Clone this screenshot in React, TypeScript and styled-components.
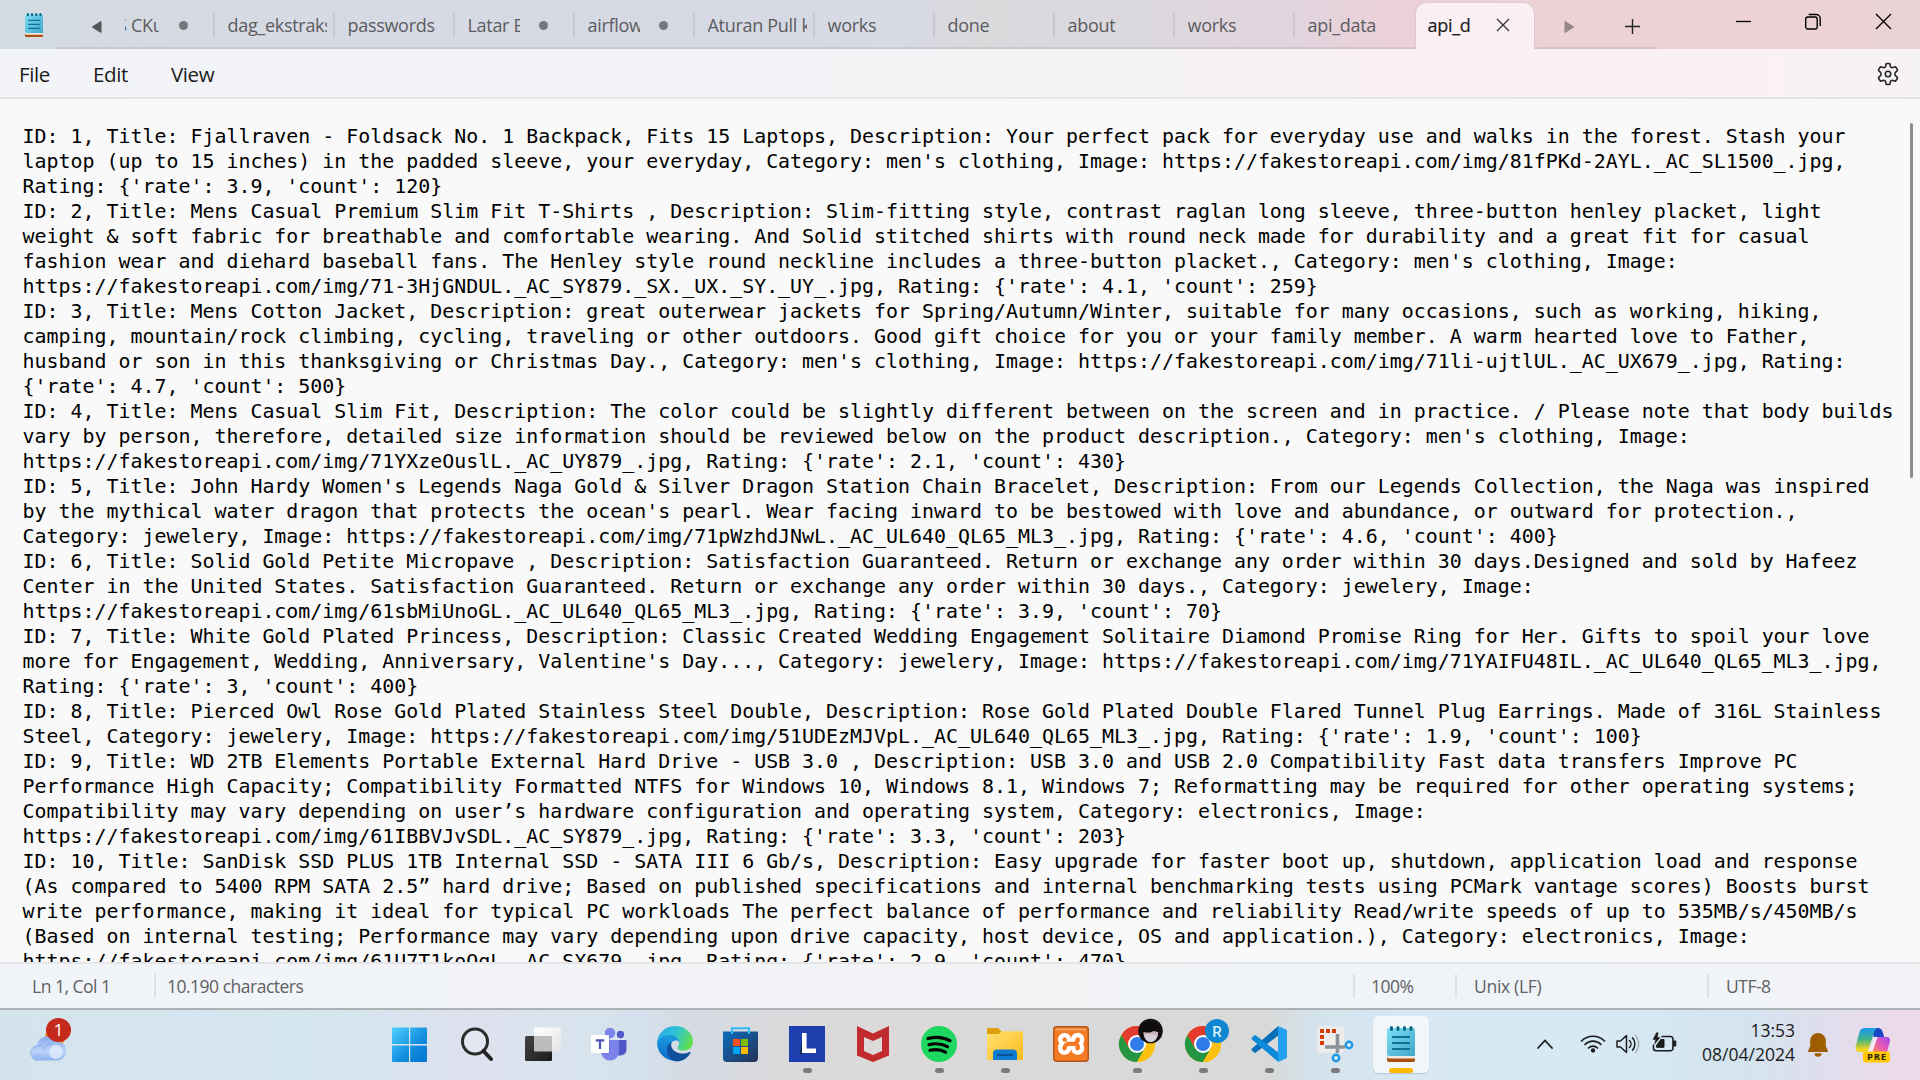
import React from "react";
import styled, { createGlobalStyle } from "styled-components";
import { SiXampp } from "react-icons/si";

const Global = createGlobalStyle`
  * { box-sizing: border-box; }
  html, body { margin: 0; padding: 0; width: 1920px; height: 1080px; overflow: hidden; }
  body { font-family: "Open Sans", "Noto Sans", sans-serif; }
  svg { display: block; flex: none; }
`;

const Screen = styled.div`
  display: flex;
  flex-direction: column;
  width: 1920px;
  height: 1080px;
  overflow: hidden;
`;

/* ---------- title bar ---------- */
const TitleBar = styled.header`
  display: flex;
  height: 49px;
  flex: none;
  background: linear-gradient(90deg, #d3dbe1 0, #d5dae2 120px, #d7dae4 400px, #d5d9e3 640px, #d8dae4 900px, #dadadd 980px, #dbd8dd 1150px, #e1d6dd 1240px, #e2d4dd 1300px, #ecd0d9 1400px, #ecd2d6 1480px, #edd1d5 1750px, #e9d3d6 1920px);
`;
const AppIcon = styled.div`
  width: 58px;
  padding: 13px 0 0 25px;
`;
const Strip = styled.div`
  display: flex;
  width: 1599px;
  border-bottom: 2px solid rgba(110, 90, 110, 0.13);
`;
const ScrollLeft = styled.div`
  width: 67px;
  padding: 21px 0 0 34px;
`;
const Tabs = styled.div`
  display: flex;
  width: 1411px;
  height: 49px;
  margin-bottom: -2px;
  overflow: hidden;
`;
const Tab = styled.div<{ $first?: boolean; $last?: boolean }>`
  display: flex;
  position: relative;
  flex: none;
  width: ${(p) => (p.$first ? 90 : 120)}px;
  padding-left: ${(p) => (p.$first ? 0 : 12.5)}px;
  height: 49px;
  &::after {
    content: "";
    position: absolute;
    right: 0;
    top: 13px;
    width: 2px;
    height: 24px;
    background: rgba(100, 100, 120, 0.15);
    display: ${(p) => (p.$last ? "none" : "block")};
  }
`;
const TabLabel = styled.span<{ $w: number; $shift?: number; $tight?: number }>`
  width: ${(p) => p.$w}px;
  overflow: hidden;
  white-space: nowrap;
  font-size: 18px;
  line-height: 24px;
  padding-top: 13px;
  height: 45px;
  color: #5b5c60;
  text-indent: ${(p) => p.$shift ?? 0}px;
  letter-spacing: ${(p) => p.$tight ?? -0.3}px;
`;
const Dot = styled.i`
  width: 9px;
  height: 9px;
  border-radius: 50%;
  background: #76787c;
  margin: 20.5px 0 0 19.5px;
`;
const ActiveTab = styled.div`
  display: flex;
  flex: none;
  width: 120px;
  height: 47px;
  margin: 2px 0 0;
  padding: 0 0 0 11.5px;
  background: #faf0f4;
  border: 1px solid #e0c8ce;
  border-bottom: 0;
  border-radius: 11px 11px 0 0;
  span { color: #1b1b1b; padding-top: 10px; -webkit-text-stroke: 0.2px #1b1b1b; }
  svg { margin: 15px 0 0 25.5px; }
`;
const StripEnd = styled.div`
  display: flex;
  padding-left: 28px;
`;
const WindowButtons = styled.div`
  display: flex;
  padding: 13px 0 0 79px;
  gap: 53px;
`;

/* ---------- menu ---------- */
const MenuBar = styled.nav`
  display: flex;
  flex: none;
  height: 50px;
  border-bottom: 2px solid #e5e5e9;
  background: linear-gradient(90deg, #f2f4f8 0, #f2f3f8 640px, #f2f3f5 850px, #f4f3f4 1100px, #f6f1f4 1250px, #faf0f4 1440px, #faf1f2 1750px, #f6f3f3 1920px);
  padding: 0 20px 0 19px;
`;
const MenuItem = styled.span<{ $w: number }>`
  width: ${(p) => p.$w}px;
  font-size: 20.5px;
  line-height: 28px;
  padding-top: 11px;
  color: #1b1b1b;
  letter-spacing: -0.4px;
`;
const Gear = styled.div`
  margin-left: auto;
  padding-top: 13px;
`;

/* ---------- editor ---------- */
const Editor = styled.main`
  display: flex;
  justify-content: space-between;
  flex: none;
  height: 863px;
  overflow: hidden;
  background: #f9f9f9;
  padding: 24px 7px 0 22.5px;
`;
const Text = styled.pre`
  margin: 1px 0 0;
  font-family: "DejaVu Sans Mono", monospace;
  font-size: 19.93px;
  line-height: 25px;
  color: #000;
`;
const Thumb = styled.div`
  width: 3px;
  height: 355px;
  background: #8d8d8d;
  border-radius: 2px;
`;

/* ---------- status bar ---------- */
const StatusBar = styled.footer`
  display: flex;
  flex: none;
  height: 48px;
  border-top: 2px solid #e3e5e6;
  border-bottom: 2px solid #abb1b5;
  background: linear-gradient(90deg, #f1f4f8 0, #f2f4f8 640px, #f2f3f5 1050px, #eff4f8 1280px, #f0f4f8 1650px, #f3f3f8 1920px);
`;
const Status = styled.span<{ $w: number; $pad: number; $ls?: number }>`
  width: ${(p) => p.$w}px;
  padding: 10px 0 0 ${(p) => p.$pad}px;
  font-size: 17.5px;
  line-height: 24px;
  white-space: nowrap;
  color: #5f6163;
  letter-spacing: ${(p) => p.$ls ?? -0.5}px;
`;
const Sep = styled.i`
  width: 2px;
  height: 24px;
  margin-top: 10px;
  background: #dfe2e5;
`;

/* ---------- task bar ---------- */
const TaskBar = styled.div`
  display: flex;
  flex: none;
  height: 70px;
  background: linear-gradient(90deg, #d3e4ec 0, #d6e5ef 200px, #d4e6ee 300px, #d8e4ef 390px, #dee1ee 470px, #d7e4ee 590px, #d4e1ec 640px, #d5dae3 690px, #d9d9dc 770px, #dcdad9 880px, #d9d9d9 1000px, #d9d9d9 1270px, #d4e2eb 1310px, #d8e9f4 1430px, #d6e9f4 1600px, #d4e4ee 1750px, #dfdeed 1820px, #ecdaea 1900px, #ecdaea 1920px);
`;
const Weather = styled.div`
  width: 393px;
  padding: 7px 0 0 29px;
  position: relative;
`;
const Badge = styled.span`
  position: absolute;
  left: 46px;
  top: 8px;
  width: 25px;
  height: 24px;
  border-radius: 50%;
  background: #c42b1c;
  color: #fff;
  font-size: 17px;
  line-height: 24px;
  text-align: center;
`;
const Apps = styled.div`
  display: flex;
  gap: 10px;
  margin-left: -10px;
`;
const AppButton = styled.div<{ $active?: boolean }>`
  display: flex;
  flex-direction: column;
  align-items: center;
  width: 56px;
  height: 57px;
  margin-top: 6px;
  padding-top: 10px;
  border-radius: 6px;
  background: ${(p) => (p.$active ? "rgba(255,255,255,.65)" : "transparent")};
  box-shadow: ${(p) => (p.$active ? "0 1px 1px rgba(120,140,155,.35)" : "none")};
`;
const Running = styled.i<{ $active?: boolean }>`
  width: ${(p) => (p.$active ? 24 : 9)}px;
  height: 5px;
  margin-top: 6px;
  border-radius: 3px;
  background: ${(p) => (p.$active ? "#ffb900" : "#7b7c7d")};
`;
const Tray = styled.div`
  display: flex;
  padding-left: 108px;
`;
const Clock = styled.div`
  width: 96px;
  margin-left: 21px;
  padding-top: 8px;
  text-align: right;
  font-size: 17.5px;
  line-height: 24px;
  color: #1c1c1c;
  white-space: nowrap;
`;
const Time = styled.div`
  letter-spacing: 0;
`;
const Day = styled.div`
  letter-spacing: 0;
`;

const record = [
  "ID: 1, Title: Fjallraven - Foldsack No. 1 Backpack, Fits 15 Laptops, Description: Your perfect pack for everyday use and walks in the forest. Stash your",
  "laptop (up to 15 inches) in the padded sleeve, your everyday, Category: men's clothing, Image: https://fakestoreapi.com/img/81fPKd-2AYL._AC_SL1500_.jpg,",
  "Rating: {'rate': 3.9, 'count': 120}",
  "ID: 2, Title: Mens Casual Premium Slim Fit T-Shirts , Description: Slim-fitting style, contrast raglan long sleeve, three-button henley placket, light",
  "weight & soft fabric for breathable and comfortable wearing. And Solid stitched shirts with round neck made for durability and a great fit for casual",
  "fashion wear and diehard baseball fans. The Henley style round neckline includes a three-button placket., Category: men's clothing, Image:",
  "https://fakestoreapi.com/img/71-3HjGNDUL._AC_SY879._SX._UX._SY._UY_.jpg, Rating: {'rate': 4.1, 'count': 259}",
  "ID: 3, Title: Mens Cotton Jacket, Description: great outerwear jackets for Spring/Autumn/Winter, suitable for many occasions, such as working, hiking,",
  "camping, mountain/rock climbing, cycling, traveling or other outdoors. Good gift choice for you or your family member. A warm hearted love to Father,",
  "husband or son in this thanksgiving or Christmas Day., Category: men's clothing, Image: https://fakestoreapi.com/img/71li-ujtlUL._AC_UX679_.jpg, Rating:",
  "{'rate': 4.7, 'count': 500}",
  "ID: 4, Title: Mens Casual Slim Fit, Description: The color could be slightly different between on the screen and in practice. / Please note that body builds",
  "vary by person, therefore, detailed size information should be reviewed below on the product description., Category: men's clothing, Image:",
  "https://fakestoreapi.com/img/71YXzeOuslL._AC_UY879_.jpg, Rating: {'rate': 2.1, 'count': 430}",
  "ID: 5, Title: John Hardy Women's Legends Naga Gold & Silver Dragon Station Chain Bracelet, Description: From our Legends Collection, the Naga was inspired",
  "by the mythical water dragon that protects the ocean's pearl. Wear facing inward to be bestowed with love and abundance, or outward for protection.,",
  "Category: jewelery, Image: https://fakestoreapi.com/img/71pWzhdJNwL._AC_UL640_QL65_ML3_.jpg, Rating: {'rate': 4.6, 'count': 400}",
  "ID: 6, Title: Solid Gold Petite Micropave , Description: Satisfaction Guaranteed. Return or exchange any order within 30 days.Designed and sold by Hafeez",
  "Center in the United States. Satisfaction Guaranteed. Return or exchange any order within 30 days., Category: jewelery, Image:",
  "https://fakestoreapi.com/img/61sbMiUnoGL._AC_UL640_QL65_ML3_.jpg, Rating: {'rate': 3.9, 'count': 70}",
  "ID: 7, Title: White Gold Plated Princess, Description: Classic Created Wedding Engagement Solitaire Diamond Promise Ring for Her. Gifts to spoil your love",
  "more for Engagement, Wedding, Anniversary, Valentine's Day..., Category: jewelery, Image: https://fakestoreapi.com/img/71YAIFU48IL._AC_UL640_QL65_ML3_.jpg,",
  "Rating: {'rate': 3, 'count': 400}",
  "ID: 8, Title: Pierced Owl Rose Gold Plated Stainless Steel Double, Description: Rose Gold Plated Double Flared Tunnel Plug Earrings. Made of 316L Stainless",
  "Steel, Category: jewelery, Image: https://fakestoreapi.com/img/51UDEzMJVpL._AC_UL640_QL65_ML3_.jpg, Rating: {'rate': 1.9, 'count': 100}",
  "ID: 9, Title: WD 2TB Elements Portable External Hard Drive - USB 3.0 , Description: USB 3.0 and USB 2.0 Compatibility Fast data transfers Improve PC",
  "Performance High Capacity; Compatibility Formatted NTFS for Windows 10, Windows 8.1, Windows 7; Reformatting may be required for other operating systems;",
  "Compatibility may vary depending on user’s hardware configuration and operating system, Category: electronics, Image:",
  "https://fakestoreapi.com/img/61IBBVJvSDL._AC_SY879_.jpg, Rating: {'rate': 3.3, 'count': 203}",
  "ID: 10, Title: SanDisk SSD PLUS 1TB Internal SSD - SATA III 6 Gb/s, Description: Easy upgrade for faster boot up, shutdown, application load and response",
  "(As compared to 5400 RPM SATA 2.5” hard drive; Based on published specifications and internal benchmarking tests using PCMark vantage scores) Boosts burst",
  "write performance, making it ideal for typical PC workloads The perfect balance of performance and reliability Read/write speeds of up to 535MB/s/450MB/s",
  "(Based on internal testing; Performance may vary depending upon drive capacity, host device, OS and application.), Category: electronics, Image:",
  "https://fakestoreapi.com/img/61U7T1koQqL._AC_SX679_.jpg, Rating: {'rate': 2.9, 'count': 470}",
].join("\n");

const Notepad = ({ w, h }: { w: number; h: number }) => (
  <svg width={w} height={h} viewBox="0 0 28 36" preserveAspectRatio="none">
    <defs>
      <linearGradient id="np" x1="0" y1="0" x2="1" y2="1">
        <stop offset="0" stopColor="#7fe0f5" />
        <stop offset="1" stopColor="#3fa6c9" />
      </linearGradient>
    </defs>
    <path d="M0 29h28v5a2 2 0 0 1-2 2H2a2 2 0 0 1-2-2z" fill="#a9500f" />
    <path d="M0 28h28v4.500H2a2 2 0 0 1-2-2z" fill="#f3e9e4" />
    <path d="M0 4a2 2 0 0 1 2-2h24a2 2 0 0 1 2 2v26H2a2 2 0 0 1-2-2z" fill="url(#np)" />
    <path d="M4.500 1.500v2M11 1.500v2M17.500 1.500v2M24 1.500v2" stroke="#0a6787" strokeWidth="3" strokeLinecap="round" />
    <path d="M5 11h18M5 17h18M5 23h18" stroke="#0b7296" strokeWidth="2" />
  </svg>
);

const S = ({ children }: { children: React.ReactNode }) => (
  <svg width="36" height="36" viewBox="0 0 36 36" overflow="visible">{children}</svg>
);

const Chrome = () => (
  <>
    <circle cx="18" cy="18" r="18" fill="#fbbc05" />
    <path d="M2.400 9A18 18 0 0 1 33.600 9H18L10.200 22.500z" fill="#e33b2e" />
    <path d="M2.400 9A18 18 0 0 0 18 36L25.800 22.500 18 18 10.200 22.500z" fill="#249542" />
    <path d="M18 36A18 18 0 0 0 33.600 9H18L25.800 22.500z" fill="#fcc010" />
    <circle cx="18" cy="18" r="9" fill="#fff" />
    <circle cx="18" cy="18" r="7" fill="#2f7bea" />
  </>
);

const apps: { el: React.ReactNode; run?: boolean; active?: boolean }[] = [
  {
    el: (
      <S>
        <defs>
          <linearGradient id="win2" x1="0" y1="0" x2="36" y2="36" gradientUnits="userSpaceOnUse">
            <stop offset="0" stopColor="#50d0ff" /><stop offset=".55" stopColor="#1490df" /><stop offset="1" stopColor="#006fd0" />
          </linearGradient>
        </defs>
        <path d="M-1 2.500a1 1 0 0 1 1-1h16v16.500H-1zM17.200 1.500H33a1 1 0 0 1 1 1V18H17.200zM-1 19.500h17V36H0a1 1 0 0 1-1-1zM17.200 19.500H34V35a1 1 0 0 1-1 1H17.200z" fill="url(#win2)" />
      </S>
    ),
  },
  {
    el: (
      <S>
        <circle cx="16" cy="15.500" r="12.500" fill="rgba(255,255,255,.2)" stroke="#2b2b2b" strokeWidth="3" />
        <path d="M24.500 25L32 33" stroke="#222" strokeWidth="4" strokeLinecap="round" />
      </S>
    ),
  },
  {
    el: (
      <S>
        <defs>
          <linearGradient id="tv" x1="0" y1="0" x2="1" y2="1"><stop offset="0" stopColor="#444" /><stop offset="1" stopColor="#1b1b1b" /></linearGradient>
          <linearGradient id="tw" x1="0" y1="0" x2="1" y2="1"><stop offset="0" stopColor="#fff" /><stop offset="1" stopColor="#e4e4e4" /></linearGradient>
        </defs>
        <rect x="9" y="1.500" width="27" height="24" rx="1" fill="url(#tw)" />
        <rect x="0" y="10" width="27" height="25" rx="1.500" fill="url(#tv)" />
        <path d="M9 10h18v15.500H10a1 1 0 0 1-1-1z" fill="#bdbdbd" />
      </S>
    ),
  },
  {
    el: (
      <S>
        <circle cx="29.500" cy="8.500" r="3.700" fill="#5059c9" />
        <path d="M24 14h10.500a1 1 0 0 1 1 1v8.500a6 6 0 0 1-6 6H24z" fill="#4f57c6" />
        <circle cx="19" cy="7" r="5.200" fill="#7b83eb" />
        <path d="M10 14h17a1.200 1.200 0 0 1 1.200 1.200V25.500a9 9 0 0 1-18.200 0z" fill="#7b83eb" />
        <path d="M10 27h9V10h-9z" fill="#5a62c4" opacity=".5" />
        <rect x="0" y="9" width="18" height="18" rx="1" fill="#fff" />
        <path d="M4.800 13.200h8.400v2.200H10.100V23H7.900v-7.600H4.800z" fill="#4b53bc" />
      </S>
    ),
  },
  {
    el: (
      <S>
        <defs>
          <linearGradient id="eg1" x1="0" y1="0.200" x2="1" y2="0.500"><stop offset="0" stopColor="#2aa7e8" /><stop offset=".5" stopColor="#2dc5d5" /><stop offset="1" stopColor="#62e04c" /></linearGradient>
          <linearGradient id="eg2" x1="0" y1="0" x2="0" y2="1"><stop offset="0" stopColor="#1b9de2" /><stop offset="1" stopColor="#0868c8" /></linearGradient>
        </defs>
        <path d="M0 18C0 9 7 0 18 0s18 8 18 15.500c0 6-4.500 9-9 9-4 0-6.500-1.200-6.500-2.600 0-1 1.500-1.900 1.500-4.400C22 13 18 10 13 10 6 10 1 14 0 18z" fill="url(#eg1)" />
        <path d="M0 18c1-5.500 6-9 12.500-9C18 9 22 12 22 16c-3-3-8.500-1-8.500 4.500 0 7 6 12 11 13A18 18 0 0 1 0 18z" fill="url(#eg2)" />
        <path d="M14.500 16c-3.500 2-4.500 5-4.500 8 0 5 4 11.500 11 11.500 5.500-.8 10-4 12.500-8.500.4-.8-.3-1.300-1-1-8 3.500-16 .5-18-5-.5-2-.5-3.500 0-5z" fill="#104f9a" />
      </S>
    ),
  },
  {
    el: (
      <S>
        <defs><linearGradient id="st" x1="0" y1="0" x2="1" y2="1"><stop offset="0" stopColor="#0c6cbd" /><stop offset="1" stopColor="#263457" /></linearGradient></defs>
        <path d="M0 5.500h35V32a4 4 0 0 1-4 4H4a4 4 0 0 1-4-4z" fill="url(#st)" />
        <path d="M9 8V2.200h17V8" fill="none" stroke="#2fb9f4" strokeWidth="2" />
        <path d="M10 13h7v7h-7z" fill="#f25022" /><path d="M18 13h7v7h-7z" fill="#7fba00" />
        <path d="M10 21h7v7h-7z" fill="#00a4ef" /><path d="M18 21h7v7h-7z" fill="#ffb900" />
      </S>
    ),
  },
  {
    el: (
      <S>
        <path d="M0 0h36v36H0z" fill="#1e3fae" />
        <path d="M13 15l-2.500 13.500L17 27z" fill="#0d2d57" />
        <path d="M13 7h4.600v15.500H27V27H13z" fill="#fff" />
      </S>
    ),
    run: true,
  },
  {
    el: (
      <S><path fillRule="evenodd" d="M2 0l16 7.500L34 0v29.500L18 36 2 29.500zM9 11v14l9 4 9-4V11l-9 4z" fill="#c12b2d" /></S>
    ),
  },
  {
    el: (
      <S>
        <circle cx="18" cy="18" r="18" fill="#1ed760" />
        <path d="M7 12.500c8-2.200 15.500-1.300 22 2.200M8 18.700c7-1.800 13-1 18.500 2M9 24.300c5.500-1.300 11-.7 15.500 1.900" fill="none" stroke="#000" strokeWidth="3.200" strokeLinecap="round" />
      </S>
    ),
    run: true,
  },
  {
    el: (
      <S>
        <defs><linearGradient id="fo" x1="0" y1="0" x2="1" y2="1"><stop offset="0" stopColor="#ffe071" /><stop offset="1" stopColor="#fbbd1c" /></linearGradient></defs>
        <path d="M0 3a1 1 0 0 1 1-1h10l4 4v5H0z" fill="#dfa00a" />
        <path d="M0 8h11.500L15 5.200h20a1 1 0 0 1 1 1V34H0z" fill="url(#fo)" />
        <path d="M6 34v-6.500a4 4 0 0 1 4-4h16a4 4 0 0 1 4 4V34z" fill="#0e7bd0" />
        <path d="M11 29h14" stroke="#0a4f91" strokeWidth="2" strokeLinecap="round" />
      </S>
    ),
    run: true,
  },
  {
    el: (
      <S>
        <rect x="3" y="3" width="30" height="30" fill="#fff" />
        <SiXampp size={36} color="#f67a26" />
        <path d="M2.500 2.500h31V4.500h-31z" fill="#f9b07b" opacity=".7" />
        <rect x="0.700" y="0.700" width="34.600" height="34.600" rx="3" fill="none" stroke="#b1571d" strokeWidth="1.400" />
      </S>
    ),
  },
  {
    el: (
      <S>
        <Chrome />
        <circle cx="31.500" cy="5" r="12.300" fill="#141112" />
        <path d="M24.500 5c2-2 12-3 14.500 0 1 6-3 11-7.500 11s-7.500-6-7-11z" fill="#c4aeb2" />
        <path d="M25 9c4-1.500 9-1.500 13.500 0-1 5-4 7-7 7s-6-3-6.500-7z" fill="#d3cdd9" />
        <path d="M20.500 5c3-12 19-12 22 0-2 3-5 0-8 0-4 3-10 1-14 0z" fill="#100d0e" />
      </S>
    ),
    run: true,
  },
  {
    el: (
      <S>
        <Chrome />
        <circle cx="32" cy="5" r="12" fill="#0f86d0" />
        <text x="32" y="10.500" textAnchor="middle" fontSize="15" fontFamily="Roboto" fontWeight="500" fill="#d9f1ff">R</text>
      </S>
    ),
    run: true,
  },
  {
    el: (
      <S>
        <path d="M1 24.500l2 2a1.500 1.500 0 0 0 2 0L28 9V0l-1.500.7L1 22.500a1.400 1.400 0 0 0 0 2z" fill="#0a6fb8" />
        <path d="M1 11.500l2-2a1.500 1.500 0 0 1 2 0L28 27v9l-1.500-.7L1 13.500a1.400 1.400 0 0 1 0-2z" fill="#0e8bd8" />
        <path d="M27 0l8 3.500a1.800 1.800 0 0 1 1 1.600v25.800a1.800 1.800 0 0 1-1 1.600L27 36z" fill="#23a1f0" />
      </S>
    ),
    run: true,
  },
  {
    el: (
      <S>
        <rect x="0" y="0" width="27" height="27" rx="3.500" fill="#efedec" />
        <path d="M3 3h4v4H3zM9 3h4v4H9zM15 3h4v4h-4zM3 9h4v4H3zM3 15h4v4H3z" fill="#d83b01" />
        <path d="M20.500 8v19M8 21h20" stroke="#8c9299" strokeWidth="3.600" />
        <circle cx="32" cy="19" r="3.200" fill="#d8ecf8" stroke="#1a97df" strokeWidth="2.400" />
        <circle cx="19" cy="32" r="3.200" fill="#d8ecf8" stroke="#1a97df" strokeWidth="2.400" />
      </S>
    ),
    run: true,
  },
  { el: <Notepad w={28} h={36} />, run: true, active: true },
];

const tabs = [
  { t: "dag_ekstraksi" },
  { t: "passwords" },
  { t: "Latar Belakang", dot: true },
  { t: "airflow", dot: true },
  { t: "Aturan Pull ke" },
  { t: "works" },
  { t: "done" },
  { t: "about" },
  { t: "works" },
  { t: "api_data" },
];

export default function App() {
  return (
    <Screen>
      <Global />
      <TitleBar>
        <AppIcon><Notepad w={18} h={24} /></AppIcon>
        <Strip>
          <ScrollLeft>
            <svg width="10" height="12" viewBox="0 0 10 12"><path d="M9.500.8v10.400a.6.600 0 0 1-1 .5L.6 6.700a.9.900 0 0 1 0-1.400L8.500.3a.6.600 0 0 1 1 .5z" fill="#55565a" /></svg>
          </ScrollLeft>
          <Tabs>
            <Tab $first><TabLabel $w={34} $shift={-8}>S CKurs</TabLabel><Dot /></Tab>
            {tabs.map((tab, i) => (
              <Tab key={i} $last={i === tabs.length - 1}>
                <TabLabel $w={tab.dot ? 52 : 99.5}>{tab.t}</TabLabel>
                {tab.dot && <Dot />}
              </Tab>
            ))}
            <ActiveTab>
              <TabLabel $w={43} $tight={-0.3}>api_data</TabLabel>
              <svg width="14" height="14" viewBox="0 0 14 14"><path d="M1 1l12 12M13 1L1 13" stroke="#333" strokeWidth="1.300" /></svg>
            </ActiveTab>
          </Tabs>
          <StripEnd>
            <svg width="10" height="12" viewBox="0 0 10 12" style={{ marginTop: 21 }}><path d="M.5.800v10.400a.6.600 0 0 0 1 .5l7.900-5a.9.900 0 0 0 0-1.400L1.500.3a.6.600 0 0 0-1 .5z" fill="#97868c" /></svg>
            <svg width="15" height="15" viewBox="0 0 15 15" style={{ margin: "19px 0 0 51px" }}><path d="M7.500 0v15M0 7.500h15" stroke="#222" strokeWidth="1.400" /></svg>
          </StripEnd>
        </Strip>
        <WindowButtons>
          <svg width="16" height="16" viewBox="0 0 16 16"><path d="M0 8.500h15" stroke="#000" strokeWidth="1.300" /></svg>
          <svg width="17" height="17" viewBox="0 0 17 17" fill="none" stroke="#000" strokeWidth="1.400"><rect x="0.700" y="4" width="11.500" height="12" rx="2.200" /><path d="M3.700 1.500h7.500a4 4 0 0 1 4 4V13" /></svg>
          <svg width="17" height="17" viewBox="0 0 17 17"><path d="M1 1l15 15M16 1L1 16" stroke="#000" strokeWidth="1.400" /></svg>
        </WindowButtons>
      </TitleBar>
      <MenuBar>
        <MenuItem $w={74}>File</MenuItem>
        <MenuItem $w={78}>Edit</MenuItem>
        <MenuItem $w={60}>View</MenuItem>
        <Gear>
          <svg width="24" height="24" viewBox="0 0 24 24" fill="none" stroke="#262626" strokeWidth="1.600" strokeLinejoin="round">
            <path d="M10.100 1.800Q12 1.200 13.900 1.800L14.500 4.800Q15 5.500 16.200 5.700L19.400 4.700Q21 6.200 21.500 8.500L19.200 10.700Q18.700 12 19.200 13.300L21.500 15.500Q21 17.800 19.400 19.300L16.200 18.300Q15 18.500 14.500 19.200L13.900 22.200Q12 22.800 10.100 22.200L9.500 19.200Q9 18.500 7.800 18.300L4.600 19.300Q3 17.800 2.500 15.500L4.800 13.300Q5.300 12 4.800 10.700L2.500 8.500Q3 6.200 4.600 4.700L7.800 5.700Q9 5.500 9.500 4.800z" />
            <circle cx="12" cy="12" r="2.700" />
          </svg>
        </Gear>
      </MenuBar>
      <Editor>
        <Text>{record}</Text>
        <Thumb />
      </Editor>
      <StatusBar>
        <Status $w={154} $pad={32}>Ln 1, Col 1</Status>
        <Sep />
        <Status $w={1197} $pad={11}>10.190 characters</Status>
        <Sep />
        <Status $w={100} $pad={16}>100%</Status>
        <Sep />
        <Status $w={250} $pad={17} $ls={-0.3}>Unix (LF)</Status>
        <Sep />
        <Status $w={200} $pad={17}>UTF-8</Status>
      </StatusBar>
      <TaskBar>
        <Weather>
          <svg width="40" height="48" viewBox="0 0 40 48">
            <defs><linearGradient id="cl" x1="0" y1="0" x2="0" y2="1"><stop offset="0" stopColor="#86a9ee" /><stop offset=".6" stopColor="#bcd3f8" /><stop offset="1" stopColor="#8fb1f1" /></linearGradient></defs>
            <circle cx="26" cy="20" r="10" fill="#f7820c" />
            <path d="M9 43.500a8 8 0 0 1-1-15.500 10.500 10.500 0 0 1 19-4 9.500 9.500 0 0 1 1 19.500z" fill="url(#cl)" />
            <path d="M9 43.500a7.500 7.500 0 1 1 4-14 M14 33a9 9 0 0 1 9-6" fill="none" stroke="#7b9fe6" strokeWidth="1" opacity=".7" />
            <circle cx="27" cy="35" r="7" fill="#e2edfc" opacity=".8" />
          </svg>
          <Badge>1</Badge>
        </Weather>
        <Apps>
          {apps.map((a, i) => (
            <AppButton key={i} $active={a.active}>
              {a.el}
              {a.run && <Running $active={a.active} />}
            </AppButton>
          ))}
        </Apps>
        <Tray>
          <svg width="16" height="10" viewBox="0 0 16 10" style={{ marginTop: 29 }}><path d="M1 9l7-7.500L15 9" fill="none" stroke="#1c1c1c" strokeWidth="1.800" strokeLinecap="round" /></svg>
          <svg width="26" height="20" viewBox="0 0 26 20" fill="none" stroke="#1c1c1c" strokeWidth="1.700" strokeLinecap="round" style={{ margin: "23px 0 0 27px" }}>
            <path d="M1.500 8a16.300 16.300 0 0 1 23 0M5 11.500a11.300 11.300 0 0 1 16 0M8.500 15a6.300 6.300 0 0 1 9 0" /><circle cx="13" cy="17.500" r="1.300" fill="#1c1c1c" />
          </svg>
          <svg width="25" height="22" viewBox="0 0 25 22" fill="none" stroke="#1c1c1c" strokeWidth="1.500" strokeLinecap="round" strokeLinejoin="round" style={{ margin: "23px 0 0 10px" }}>
            <path d="M1 8h3.500l6-5.500v17l-6-5.500H1z" /><path d="M13.500 7.500a5 5 0 0 1 0 7M16.500 4.800a9.300 9.300 0 0 1 0 12.400" /><path d="M19.500 2.500a13 13 0 0 1 0 17" stroke="#a9b5bd" />
          </svg>
          <svg width="26" height="22" viewBox="0 0 26 22" fill="none" stroke="#1c1c1c" strokeWidth="1.600" style={{ margin: "22px 0 0 11px" }}>
            <path d="M9.500 4.500H18.500a2.500 2.500 0 0 1 2.500 2.500v9.200a2.500 2.500 0 0 1-2.500 2.500H4a2.500 2.500 0 0 1-2.500-2.500V12.500" />
            <path d="M21.500 9h2.300v5h-2.300z" fill="#1c1c1c" strokeWidth="1" />
            <path d="M8.800 7.500H12V15.300H4.500V13.500z" fill="#1c1c1c" strokeWidth="1" />
            <path d="M4.500.8L1 7.500h2.600L2.700 12l5.300-6.500H5.200l1-4.700z" fill="#1c1c1c" strokeWidth=".5" />
          </svg>
          <Clock>
            <Time>13:53</Time>
            <Day>08/04/2024</Day>
          </Clock>
          <svg width="22" height="26" viewBox="0 0 22 26" style={{ margin: "22px 0 0 12px" }}>
            <path d="M11 1a7.800 7.800 0 0 1 7.800 7.800v5.500l2.100 4.400a.9.900 0 0 1-.8 1.300H1.900a.9.900 0 0 1-.8-1.300l2.100-4.400V8.800A7.800 7.800 0 0 1 11 1zM7.500 21.300h7a3.500 3.500 0 0 1-7 0z" fill="#9d5d00" />
          </svg>
          <svg width="36" height="36" viewBox="0 0 36 36" style={{ margin: "17px 0 0 26px" }}>
            <defs>
              <linearGradient id="c1" x1="0" y1="0" x2="0" y2="1"><stop offset="0" stopColor="#1c9bf0" /><stop offset=".45" stopColor="#3bb08f" /><stop offset=".9" stopColor="#f2d617" /></linearGradient>
              <linearGradient id="c2" x1="1" y1="0" x2="0" y2="1"><stop offset="0" stopColor="#9a4df0" /><stop offset=".5" stopColor="#e455b8" /><stop offset="1" stopColor="#fb8a5a" /></linearGradient>
            </defs>
            <path d="M15 1h8c3 0 4 2 5 5l1.200 4H19z" fill="#1b45c9" />
            <path d="M9.500 1h13c-2.500 1-3.500 4-4.500 8l-4 12c-1 3-2 4-5 4H5c-4 0-5-3-4.200-6.500L4.500 5c1-3 2.500-4 5-4z" fill="url(#c1)" />
            <path d="M20 10h4l-5 15h-6z" fill="#f2e9f3" />
            <path d="M24 10h7.500c3 0 4 2 3.300 5L32 25H17.500l4-12c.5-2 1.200-3 2.500-3z" fill="url(#c2)" />
            <rect x="8" y="24.500" width="27" height="11" rx="2.500" fill="#ffc800" />
            <text x="22" y="33.300" textAnchor="middle" fontSize="9.500" letterSpacing=".8" fontWeight="700" fontFamily="Open Sans" fill="#2a2208">PRE</text>
          </svg>
        </Tray>
      </TaskBar>
    </Screen>
  );
}
